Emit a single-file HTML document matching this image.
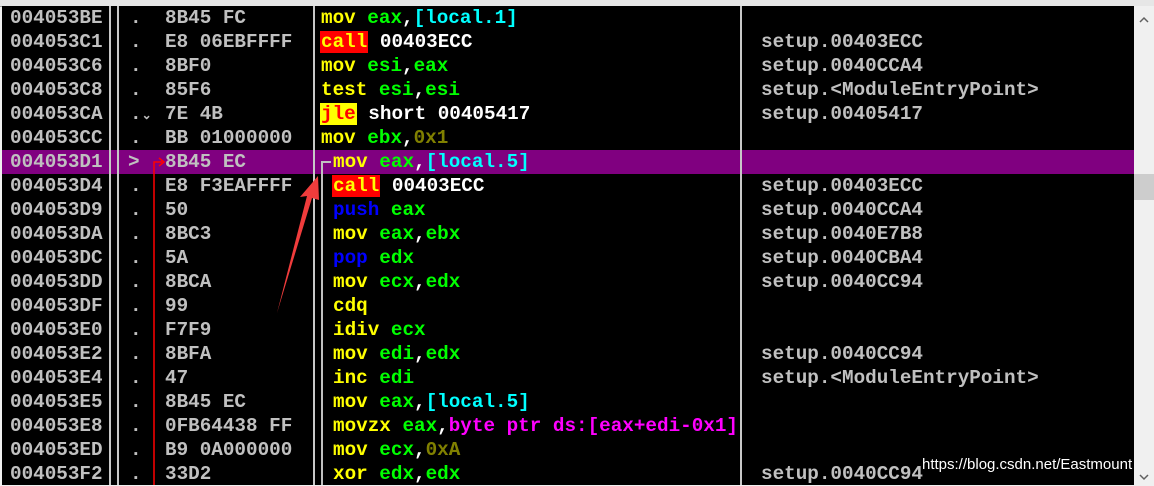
<!DOCTYPE html>
<html><head><meta charset="utf-8"><style>
html,body{margin:0;padding:0;width:1154px;height:485px;overflow:hidden;background:#f0f0f0;}
#main{position:absolute;left:2px;top:6px;width:1132px;height:479px;background:#000;}
.r{position:absolute;left:0;width:1154px;height:24px;font:bold 19.3px/24px "Liberation Mono",monospace;color:#c0c0c0;white-space:pre;}
.r span{position:absolute;top:0;}
.y{color:#ff0}.g{color:#0f0}.c{color:#0ff}.w{color:#fff}.b{color:#0000ff}.o{color:#808000}.m{color:#f0f}
.cl{background:#f00;color:#ff0;padding:0 1px;margin-left:-1px}
.jl{background:#ff0;color:#f00;padding:0 1px;margin-left:-1px}
.vl{position:absolute;top:6px;height:479px;width:2px;background:#c8c8c8;}
</style></head><body>
<div style="position:absolute;left:0;top:0;width:1154px;height:6px;background:#e6e6e6;border-bottom:1px solid #a0a0a0"></div>
<div id="main"></div>
<div style="position:absolute;left:2px;top:150px;width:1132px;height:24px;background:#800080"></div>
<div class="vl" style="left:109px"></div><div class="vl" style="left:117px"></div>
<div class="vl" style="left:313px"></div><div class="vl" style="left:740px"></div>
<div style="position:absolute;left:1134px;top:6px;width:20px;height:479px;background:#f0f0f0"></div>
<div style="position:absolute;left:1134px;top:174px;width:20px;height:26px;background:#cdcdcd"></div>
<svg style="position:absolute;left:1134px;top:6px" width="20" height="479"><path d="M6 16 L10 12 L14 16" stroke="#606060" stroke-width="1.5" fill="none"/><path d="M6 469 L10 473 L14 469" stroke="#606060" stroke-width="1.5" fill="none"/></svg>

<div class="r" style="top:6px"><span style="left:10px">004053BE</span><span style="left:130px">.</span><span style="left:165px">8B45 FC</span><span style="left:321px"><b class="y">mov</b> <b class="g">eax</b><b class="w">,</b><b class="c">[local.1]</b></span></div>
<div class="r" style="top:30px"><span style="left:10px">004053C1</span><span style="left:130px">.</span><span style="left:165px">E8 06EBFFFF</span><span style="left:321px"><b class="cl">call</b> <b class="w">00403ECC</b></span><span style="left:761px">setup.00403ECC</span></div>
<div class="r" style="top:54px"><span style="left:10px">004053C6</span><span style="left:130px">.</span><span style="left:165px">8BF0</span><span style="left:321px"><b class="y">mov</b> <b class="g">esi</b><b class="w">,</b><b class="g">eax</b></span><span style="left:761px">setup.0040CCA4</span></div>
<div class="r" style="top:78px"><span style="left:10px">004053C8</span><span style="left:130px">.</span><span style="left:165px">85F6</span><span style="left:321px"><b class="y">test</b> <b class="g">esi</b><b class="w">,</b><b class="g">esi</b></span><span style="left:761px">setup.&lt;ModuleEntryPoint&gt;</span></div>
<div class="r" style="top:102px"><span style="left:10px">004053CA</span><span style="left:130px">.<small style="font-size:12px">&#x2304;</small></span><span style="left:165px">7E 4B</span><span style="left:321px"><b class="jl">jle</b> <b class="w">short 00405417</b></span><span style="left:761px">setup.00405417</span></div>
<div class="r" style="top:126px"><span style="left:10px">004053CC</span><span style="left:130px">.</span><span style="left:165px">BB 01000000</span><span style="left:321px"><b class="y">mov</b> <b class="g">ebx</b><b class="w">,</b><b class="o">0x1</b></span></div>
<div class="r" style="top:150px"><span style="left:10px">004053D1</span><span style="left:128px">&gt;</span><span style="left:165px">8B45 EC</span><span style="left:333px"><b class="y">mov</b> <b class="g">eax</b><b class="w">,</b><b class="c">[local.5]</b></span></div>
<div class="r" style="top:174px"><span style="left:10px">004053D4</span><span style="left:130px">.</span><span style="left:165px">E8 F3EAFFFF</span><span style="left:333px"><b class="cl">call</b> <b class="w">00403ECC</b></span><span style="left:761px">setup.00403ECC</span></div>
<div class="r" style="top:198px"><span style="left:10px">004053D9</span><span style="left:130px">.</span><span style="left:165px">50</span><span style="left:333px"><b class="b">push</b> <b class="g">eax</b></span><span style="left:761px">setup.0040CCA4</span></div>
<div class="r" style="top:222px"><span style="left:10px">004053DA</span><span style="left:130px">.</span><span style="left:165px">8BC3</span><span style="left:333px"><b class="y">mov</b> <b class="g">eax</b><b class="w">,</b><b class="g">ebx</b></span><span style="left:761px">setup.0040E7B8</span></div>
<div class="r" style="top:246px"><span style="left:10px">004053DC</span><span style="left:130px">.</span><span style="left:165px">5A</span><span style="left:333px"><b class="b">pop</b> <b class="g">edx</b></span><span style="left:761px">setup.0040CBA4</span></div>
<div class="r" style="top:270px"><span style="left:10px">004053DD</span><span style="left:130px">.</span><span style="left:165px">8BCA</span><span style="left:333px"><b class="y">mov</b> <b class="g">ecx</b><b class="w">,</b><b class="g">edx</b></span><span style="left:761px">setup.0040CC94</span></div>
<div class="r" style="top:294px"><span style="left:10px">004053DF</span><span style="left:130px">.</span><span style="left:165px">99</span><span style="left:333px"><b class="y">cdq</b></span></div>
<div class="r" style="top:318px"><span style="left:10px">004053E0</span><span style="left:130px">.</span><span style="left:165px">F7F9</span><span style="left:333px"><b class="y">idiv</b> <b class="g">ecx</b></span></div>
<div class="r" style="top:342px"><span style="left:10px">004053E2</span><span style="left:130px">.</span><span style="left:165px">8BFA</span><span style="left:333px"><b class="y">mov</b> <b class="g">edi</b><b class="w">,</b><b class="g">edx</b></span><span style="left:761px">setup.0040CC94</span></div>
<div class="r" style="top:366px"><span style="left:10px">004053E4</span><span style="left:130px">.</span><span style="left:165px">47</span><span style="left:333px"><b class="y">inc</b> <b class="g">edi</b></span><span style="left:761px">setup.&lt;ModuleEntryPoint&gt;</span></div>
<div class="r" style="top:390px"><span style="left:10px">004053E5</span><span style="left:130px">.</span><span style="left:165px">8B45 EC</span><span style="left:333px"><b class="y">mov</b> <b class="g">eax</b><b class="w">,</b><b class="c">[local.5]</b></span></div>
<div class="r" style="top:414px"><span style="left:10px">004053E8</span><span style="left:130px">.</span><span style="left:165px">0FB64438 FF</span><span style="left:333px;width:405px;overflow:hidden"><b class="y">movzx</b> <b class="g">eax</b><b class="w">,</b><b class="m">byte ptr ds:[eax+edi-0x1]</b></span></div>
<div class="r" style="top:438px"><span style="left:10px">004053ED</span><span style="left:130px">.</span><span style="left:165px">B9 0A000000</span><span style="left:333px"><b class="y">mov</b> <b class="g">ecx</b><b class="w">,</b><b class="o">0xA</b></span></div>
<div class="r" style="top:462px"><span style="left:10px">004053F2</span><span style="left:130px">.</span><span style="left:165px">33D2</span><span style="left:333px"><b class="y">xor</b> <b class="g">edx</b><b class="w">,</b><b class="g">edx</b></span><span style="left:761px">setup.0040CC94</span></div>

<svg style="position:absolute;left:0;top:0" width="1154" height="485">
<path d="M154 485 V162 H162" stroke="#f00" stroke-width="1.5" fill="none"/>
<path d="M159 158 L164 162 L159 166" stroke="#f00" stroke-width="1.5" fill="none"/>
<path d="M322 485 V162 H331" stroke="#c0c0c0" stroke-width="2" fill="none"/>
<polygon points="318,176 300,197 307,196 277,313 312,198 319,200" fill="#f03c3c"/>
</svg>
<div style="position:absolute;left:922px;top:456px;font:15px/18px 'Liberation Sans',sans-serif;color:#fff;text-shadow:0 0 2px #000,1px 1px 1px #000;white-space:nowrap">https://blog.csdn.net/Eastmount</div>
</body></html>
